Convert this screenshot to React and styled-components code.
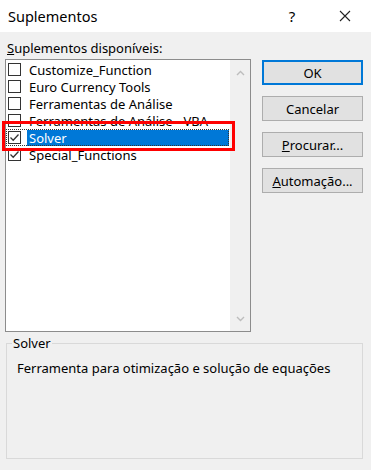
import styled, { createGlobalStyle } from "styled-components";

const GlobalStyle = createGlobalStyle`
  html, body {
    margin: 0;
    padding: 0;
    background: #f0f0f0;
  }
  body {
    font-family: "Noto Sans", "Liberation Sans", sans-serif;
    font-size: 13px;
    color: #000;
  }
`;

const items = [
  { name: "Customize_Function", checked: false },
  { name: "Euro Currency Tools", checked: false },
  { name: "Ferramentas de Análise", checked: false },
  { name: "Ferramentas de Análise - VBA", checked: false },
  { name: "Solver", checked: true, selected: true },
  { name: "Special_Functions", checked: true },
];

const Check = () => (
  <svg width="11" height="11" viewBox="0 0 11 11">
    <path d="M1.5 5.5 L4.2 8.2 L9.5 2.5" fill="none" stroke="#333" strokeWidth="1.3" />
  </svg>
);

const Chevron = ({ down }) => (
  <svg width="9" height="6" viewBox="0 0 9 6">
    <path
      d={down ? "M1 1 L4.5 4.5 L8 1" : "M1 5 L4.5 1.5 L8 5"}
      fill="none"
      stroke="#bdbdbd"
      strokeWidth="1.4"
    />
  </svg>
);

const App = () => {
  return (
    <Dialog>
      <GlobalStyle />
      <TitleBar>
        <Title>Suplementos</Title>
        <Help>?</Help>
        <Close>
          <svg width="12" height="12" viewBox="0 0 12 12">
            <path d="M1 1 L11 11 M11 1 L1 11" stroke="#222" strokeWidth="1.1" />
          </svg>
        </Close>
      </TitleBar>
      <Body>
        <Label>
          <u>S</u>uplementos disponíveis:
        </Label>
        <Main>
          <ListBox>
            <Rows>
              {items.map((it) => (
                <Row key={it.name} selected={it.selected}>
                  <Box>{it.checked && <Check />}</Box>
                  <ItemText selected={it.selected}>{it.name}</ItemText>
                </Row>
              ))}
            </Rows>
            <ScrollBar>
              <Chevron />
              <Chevron down />
            </ScrollBar>
            <Highlight />
          </ListBox>
          <Buttons>
            <Button primary>OK</Button>
            <Button>Cancelar</Button>
            <Button>
              <u>P</u>rocurar...
            </Button>
            <Button>
              <u>A</u>utomação...
            </Button>
          </Buttons>
        </Main>
        <Group>
          <GroupTitle>Solver</GroupTitle>
          <Description>Ferramenta para otimização e solução de equações</Description>
        </Group>
      </Body>
    </Dialog>
  );
};

const Dialog = styled.div`
  width: 371px;
  height: 470px;
  background: #f0f0f0;
  display: flex;
  flex-direction: column;
  overflow: hidden;
`;

const TitleBar = styled.div`
  height: 32px;
  background: #fff;
  display: flex;
  align-items: center;
  padding-left: 8px;
  flex-shrink: 0;
`;

const Title = styled.div`
  font-size: 14.5px;
  flex: 1;
`;

const Help = styled.div`
  font-size: 15px;
  width: 20px;
  margin-right: 37px;
  text-align: center;
`;

const Close = styled.div`
  width: 12px;
  display: flex;
  margin-right: 20px;
`;

const Body = styled.div`
  padding: 8px 8px 0 5px;
`;

const Label = styled.div`
  height: 19px;
  padding-left: 2px;
  line-height: 16px;
`;

const Main = styled.div`
  display: flex;
  gap: 11px;
`;

const ListBox = styled.div`
  position: relative;
  width: 246px;
  height: 273px;
  box-sizing: border-box;
  border: 1px solid #8c8c8c;
  background: #fff;
  display: flex;
`;

const Rows = styled.div`
  flex: 1;
  padding-top: 1px;
`;

const Row = styled.div`
  height: 17px;
  display: flex;
  align-items: center;
  padding-left: 2px;
  margin-right: 1px;
  outline: ${(p) => (p.selected ? "1px dotted #333" : "none")};
  outline-offset: -1px;
`;

const Box = styled.div`
  width: 13px;
  height: 13px;
  box-sizing: border-box;
  border: 1px solid #333;
  background: #fff;
  display: flex;
  align-items: center;
  justify-content: center;
  margin-right: 6px;
`;

const ItemText = styled.div`
  flex: 1;
  height: 16px;
  line-height: 16px;
  padding-left: 2px;
  background: ${(p) => (p.selected ? "#0078d7" : "transparent")};
  color: ${(p) => (p.selected ? "#fff" : "#000")};
`;

const ScrollBar = styled.div`
  width: 20px;
  background: #f0f0f0;
  display: flex;
  flex-direction: column;
  justify-content: space-between;
  align-items: center;
  padding: 10px 0 9px;
  box-sizing: border-box;
`;

const Highlight = styled.div`
  position: absolute;
  left: -4px;
  top: 61px;
  width: 233px;
  height: 30px;
  box-sizing: border-box;
  border: 3px solid #ff0000;
`;

const Buttons = styled.div`
  display: flex;
  flex-direction: column;
  gap: 11px;
  padding-top: 1px;
`;

const Button = styled.div`
  width: 101px;
  height: 25px;
  box-sizing: border-box;
  background: #e1e1e1;
  border: ${(p) => (p.primary ? "2px solid #0078d7" : "1px solid #adadad")};
  display: flex;
  align-items: center;
  justify-content: center;
`;

const Group = styled.div`
  position: relative;
  margin: 11px 0 0 1px;
  width: 357px;
  height: 116px;
  box-sizing: border-box;
  border: 1px solid #d9d9d9;
  padding: 15px 10px 0;
`;

const GroupTitle = styled.div`
  position: absolute;
  top: -9px;
  left: 5px;
  padding: 0 1px;
  line-height: 16px;
  background: #f0f0f0;
`;

const Description = styled.div`
  line-height: 18px;
`;

export default App;
